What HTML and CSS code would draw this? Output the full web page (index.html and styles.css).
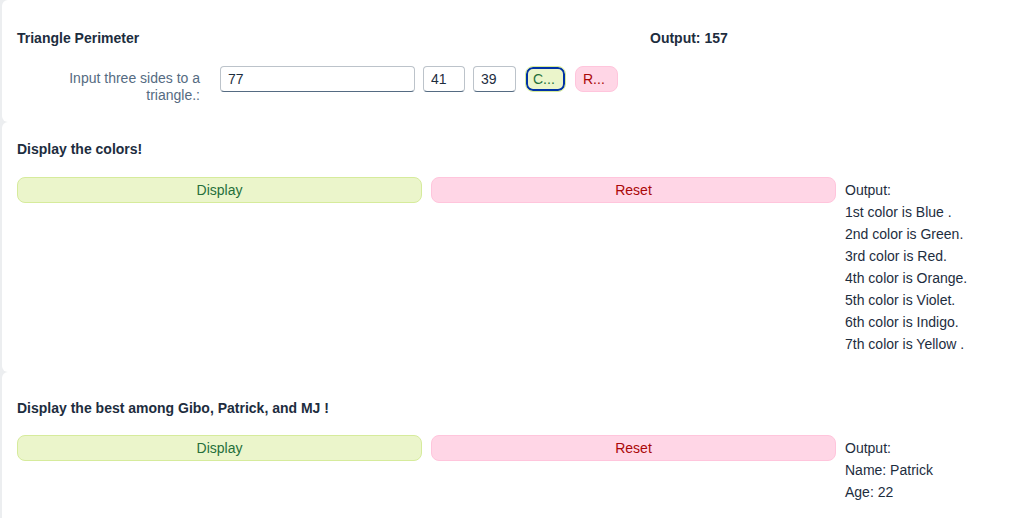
FILE: index.html
```html
<!DOCTYPE html>
<html>
<head>
<meta charset="utf-8">
<link rel="stylesheet" href="styles.css">
</head>
<body>
<div class="page">
  <section class="panel panel-triangle">
    <div class="head-row">
      <div class="title">Triangle Perimeter</div>
      <div class="title">Output: 157</div>
    </div>
    <div class="form-row">
      <label class="form-label">Input three sides to a triangle.:</label>
      <input class="field field-wide" type="text" value="77">
      <input class="field field-small" type="text" value="41">
      <input class="field field-small3" type="text" value="39">
      <button class="btn btn-accept btn-short btn-focus">C...</button>
      <button class="btn btn-reject btn-short">R...</button>
    </div>
  </section>

  <section class="panel panel-colors">
    <div class="title">Display the colors!</div>
    <div class="action-grid">
      <button class="btn btn-accept">Display</button>
      <button class="btn btn-reject">Reset</button>
      <div class="output">
        <div>Output:</div>
        <div>1st color is Blue .</div>
        <div>2nd color is Green.</div>
        <div>3rd color is Red.</div>
        <div>4th color is Orange.</div>
        <div>5th color is Violet.</div>
        <div>6th color is Indigo.</div>
        <div>7th color is Yellow .</div>
      </div>
    </div>
  </section>

  <section class="panel panel-best">
    <div class="title">Display the best among Gibo, Patrick, and MJ !</div>
    <div class="action-grid">
      <button class="btn btn-accept">Display</button>
      <button class="btn btn-reject">Reset</button>
      <div class="output">
        <div>Output:</div>
        <div>Name: Patrick</div>
        <div>Age: 22</div>
      </div>
    </div>
  </section>
</div>
</body>
</html>
```

FILE: styles.css
```css
* { box-sizing: border-box; }

html, body {
  margin: 0;
  padding: 0;
  height: 100%;
}

body {
  background: #eceef0;
  font-family: "Liberation Sans", Arial, sans-serif;
  font-size: 14px;
  color: #1d2d3e;
  overflow: hidden;
}

.page {
  padding-left: 2px;
  min-height: 100%;
  display: flex;
  flex-direction: column;
}

.panel {
  background: #ffffff;
  border-radius: 6px 0 0 6px;
  padding-left: 15px;
  padding-right: 15px;
}

.panel-triangle {
  padding-top: 29px;
  height: 122px;
}

.panel-colors {
  padding-top: 18px;
  height: 250px;
}

.panel-best {
  padding-top: 27px;
  flex: 1;
  border-radius: 6px 0 0 0;
}

.title {
  font-weight: bold;
  font-size: 14px;
  line-height: 18px;
}

.head-row {
  display: grid;
  grid-template-columns: 633px 1fr;
}

.form-row {
  display: flex;
  align-items: flex-start;
  margin-top: 19px;
}

.form-label {
  width: 183px;
  padding-left: 38px;
  text-align: right;
  color: #556b82;
  font-size: 14px;
  line-height: 17px;
  padding-top: 4px;
  margin-right: 20px;
}

.field {
  height: 26px;
  margin: 0 8px 0 0;
  border: 1px solid #bcc3ca;
  border-bottom-color: #556b82;
  border-radius: 4px;
  padding: 0 7px;
  font-family: inherit;
  font-size: 14px;
  color: #1d2d3e;
  background: #ffffff;
  outline: none;
}

.field-wide { width: 195px; }
.field-small { width: 42px; }
.field-small3 { width: 43px; margin-right: 9px; }

.btn {
  height: 26px;
  margin: 0;
  border-radius: 8px;
  border: 1px solid;
  font-family: inherit;
  font-size: 14px;
  padding: 0 8px;
  cursor: pointer;
}

.btn-accept {
  background: #ebf5cb;
  border-color: #d6eb9c;
  color: #256f3a;
}

.btn-reject {
  background: #ffd6e6;
  border-color: #ffc5dc;
  color: #aa0808;
}

.btn-short {
  width: 41px;
  padding: 0 7px;
  text-align: left;
  margin-right: 9px;
}

.btn-reject.btn-short {
  width: 43px;
}

.btn-focus {
  box-shadow: inset 0 0 0 2px #0032a5;
}

.action-grid {
  display: grid;
  grid-template-columns: 405px 405px 1fr;
  column-gap: 9px;
  margin-top: 19px;
  align-items: start;
}

.panel-best .action-grid {
  margin-top: 18px;
}

.output {
  margin-top: 2px;
  line-height: 22px;
  font-size: 14px;
  color: #1d2d3e;
}
```
